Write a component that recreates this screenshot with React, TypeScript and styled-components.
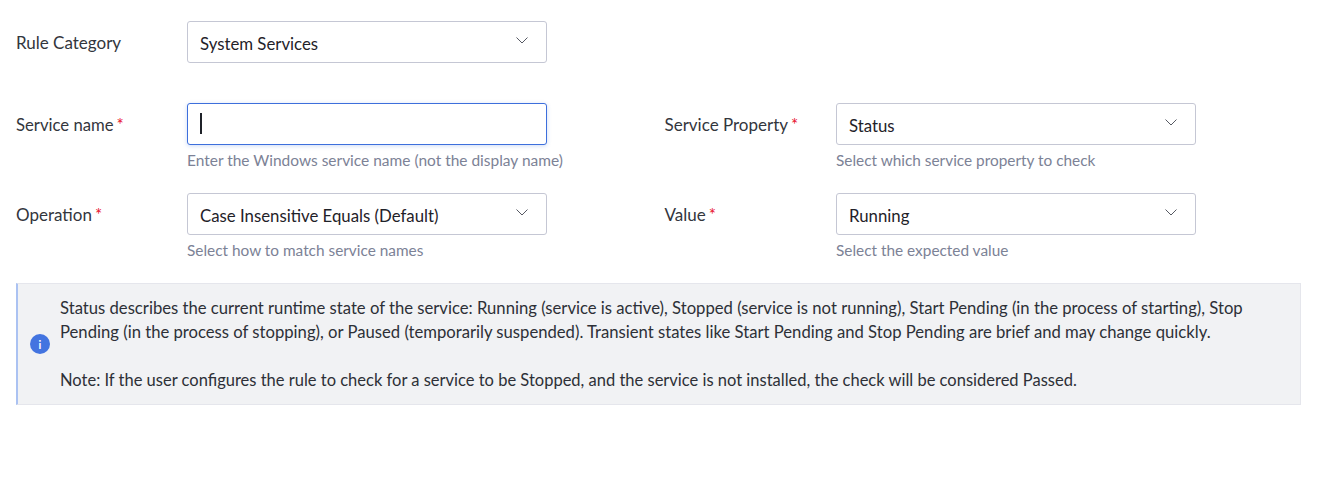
import React from "react";
import styled, { createGlobalStyle } from "styled-components";

const Global = createGlobalStyle`
  html, body { margin: 0; padding: 0; background: #fff; }
  body { font-family: "Lato", "Liberation Sans", sans-serif; color: #33363d; }
`;

const Page = styled.div`
  padding: 21px 21px 0 16px;
  display: flex;
  flex-direction: column;
`;

const CategoryRow = styled.div`
  display: flex;
  margin-bottom: 40px;
`;

const FieldGrid = styled.div`
  display: grid;
  grid-template-columns: 648.5px 1fr;
  row-gap: 23px;
  margin-bottom: 23px;
`;

const Field = styled.div`
  display: flex;
`;

const Label = styled.label<{ $width: number; $size?: number }>`
  width: ${(p) => p.$width}px;
  flex: none;
  font-size: ${(p) => p.$size ?? 17}px;
  line-height: 20px;
  padding-top: 12px;
  color: #33363d;
`;

const Required = styled.span`
  color: #e8112d;
  font-size: 17px;
  margin-left: 3px;
`;

const Control = styled.div`
  width: 360px;
  display: flex;
  flex-direction: column;
`;

const SelectBox = styled.div`
  height: 42px;
  box-sizing: border-box;
  border: 1px solid #c5c7d4;
  border-radius: 3px;
  padding: 2px 16px 0 12px;
  display: flex;
  align-items: center;
  justify-content: space-between;
  font-size: 16.8px;
  color: #1f2229;
  background: #fff;
`;

const Chevron = styled.svg`
  width: 16px;
  height: 16px;
  fill: none;
  stroke: #565963;
  stroke-width: 1;
  margin-top: -7px;
`;

const TextInput = styled.div`
  height: 42px;
  box-sizing: border-box;
  border: 1px solid #3d6fdc;
  border-radius: 3px;
  padding: 0 12px;
  display: flex;
  align-items: center;
  box-shadow: 0 1px 4px rgba(61, 111, 220, 0.25);
  background: #fff;
`;

const Caret = styled.span`
  width: 2px;
  height: 21px;
  background: #1f2229;
  margin-bottom: 1px;
`;

const Hint = styled.div<{ $size?: number }>`
  font-size: ${(p) => p.$size ?? 15.38}px;
  line-height: 20px;
  margin-top: 5px;
  color: #7c8296;
  white-space: nowrap;
`;

const Alert = styled.div`
  height: 122px;
  box-sizing: border-box;
  display: flex;
  align-items: center;
  gap: 10px;
  padding: 0 16px 0 12px;
  background: #f1f2f4;
  border: 1px solid #e5e6ec;
  border-left: 2px solid #abc2f2;
`;

const InfoIcon = styled.span`
  width: 20px;
  height: 20px;
  flex: none;
  border-radius: 50%;
  background: #4374e0;
  color: #fff;
  font-size: 11px;
  font-weight: 700;
  display: flex;
  align-items: center;
  justify-content: center;
`;

const AlertBody = styled.div`
  display: flex;
  flex-direction: column;
  gap: 24px;
  color: #2d3037;
`;

const AlertText = styled.p<{ $size: number }>`
  margin: 0;
  font-size: ${(p) => p.$size}px;
  line-height: 24px;
`;

const Select = ({ value }: { value: string }) => (
  <SelectBox>
    <span>{value}</span>
    <Chevron viewBox="0 0 16 16">
      <path d="M2.5 5.5 L8 11 L13.5 5.5" />
    </Chevron>
  </SelectBox>
);

export default function App() {
  return (
    <Page>
      <Global />
      <CategoryRow>
        <Field>
          <Label $width={171}>Rule Category</Label>
          <Control>
            <Select value="System Services" />
          </Control>
        </Field>
      </CategoryRow>
      <FieldGrid>
        <Field>
          <Label $width={171} $size={16.7}>
            Service name<Required>*</Required>
          </Label>
          <Control>
            <TextInput>
              <Caret />
            </TextInput>
            <Hint $size={15.47}>Enter the Windows service name (not the display name)</Hint>
          </Control>
        </Field>
        <Field>
          <Label $width={171.5}>
            Service Property<Required>*</Required>
          </Label>
          <Control>
            <Select value="Status" />
            <Hint>Select which service property to check</Hint>
          </Control>
        </Field>
        <Field>
          <Label $width={171}>
            Operation<Required>*</Required>
          </Label>
          <Control>
            <Select value="Case Insensitive Equals (Default)" />
            <Hint>Select how to match service names</Hint>
          </Control>
        </Field>
        <Field>
          <Label $width={171.5}>
            Value<Required>*</Required>
          </Label>
          <Control>
            <Select value="Running" />
            <Hint>Select the expected value</Hint>
          </Control>
        </Field>
      </FieldGrid>
      <Alert>
        <InfoIcon>i</InfoIcon>
        <AlertBody>
          <AlertText $size={16.66}>
            Status describes the current runtime state of the service: Running (service is active), Stopped (service is not running), Start Pending (in the process of starting), Stop Pending (in the process of stopping), or Paused (temporarily suspended). Transient states like Start Pending and Stop Pending are brief and may change quickly.
          </AlertText>
          <AlertText $size={16.5}>
            Note: If the user configures the rule to check for a service to be Stopped, and the service is not installed, the check will be considered Passed.
          </AlertText>
        </AlertBody>
      </Alert>
    </Page>
  );
}
